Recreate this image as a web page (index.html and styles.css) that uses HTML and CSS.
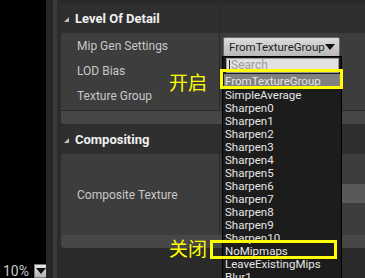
FILE: index.html
```html
<!DOCTYPE html>
<html lang="zh-CN">
  <head>
    <meta charset="UTF-8" />
    <meta name="viewport" content="width=device-width, initial-scale=1.0" />
    <title>Mip Gen Settings</title>
    <link rel="stylesheet" href="styles.css">
  </head>
  <body>
    <div class="app">
      <div class="viewport">
        <div class="zoom">
          <span>10%</span>
          <span class="zoom-btn"><span class="caret dark"></span></span>
        </div>
      </div>
      <div class="strip strip-a"></div>
      <div class="strip strip-b"></div>
      <div class="strip strip-c"></div>

      <div class="details">
        <section class="category">
          <div class="cat-head">
            <div class="name"><span class="arrow"></span>Level Of Detail</div>
            <div class="value"></div>
          </div>
          <div class="row">
            <div class="name">Mip Gen Settings</div>
            <div class="value">
              <div class="combo">FromTextureGroup<span class="caret dark"></span></div>
            </div>
          </div>
          <div class="row">
            <div class="name">LOD Bias</div>
            <div class="value"></div>
          </div>
          <div class="row">
            <div class="name">Texture Group</div>
            <div class="value"></div>
          </div>
          <div class="cat-end"></div>
        </section>
        <div class="cat-foot"></div>

        <section class="category">
          <div class="cat-head">
            <div class="name"><span class="arrow"></span>Compositing</div>
            <div class="value"></div>
          </div>
          <div class="row row-tall">
            <div class="name">Composite Texture</div>
            <div class="value"><div class="asset-box"></div></div>
          </div>
        </section>
        <div class="cat-foot"></div>
      </div>
    </div>

    <div class="menu">
      <div class="search"><span class="cursor"></span>Search</div>
      <div class="item selected">FromTextureGroup</div>
      <div class="item">SimpleAverage</div>
      <div class="item">Sharpen0</div>
      <div class="item">Sharpen1</div>
      <div class="item">Sharpen2</div>
      <div class="item">Sharpen3</div>
      <div class="item">Sharpen4</div>
      <div class="item">Sharpen5</div>
      <div class="item">Sharpen6</div>
      <div class="item">Sharpen7</div>
      <div class="item">Sharpen8</div>
      <div class="item">Sharpen9</div>
      <div class="item">Sharpen10</div>
      <div class="item">NoMipmaps</div>
      <div class="item">LeaveExistingMips</div>
      <div class="item">Blur1</div>
    </div>

    <div class="note note-on">开启</div>
    <div class="mark mark-on"></div>
    <div class="note note-off">关闭</div>
    <div class="mark mark-off"></div>
  </body>
</html>
```

FILE: styles.css
```css
* {
  margin: 0;
  padding: 0;
  box-sizing: border-box;
}

body {
  background-color: #000;
  width: 365px;
  height: 278px;
  overflow: hidden;
  position: relative;
  font-family: Roboto, "Noto Sans", sans-serif;
}

.app {
  display: flex;
  height: 278px;
}

.viewport {
  width: 46px;
  background-color: #000;
  display: flex;
  align-items: flex-end;
}

.zoom {
  display: flex;
  align-items: center;
  gap: 5px;
  padding-left: 3px;
  color: #c8c8c8;
  font-size: 14px;
  height: 15px;
}

.zoom-btn {
  width: 14px;
  height: 14px;
  background: linear-gradient(#e4e4e4, #b4b4b4);
  border: 1px solid #777;
  display: flex;
  align-items: center;
  justify-content: center;
}

.strip-a {
  width: 7px;
  background-color: #262626;
}

.strip-b {
  width: 4px;
  background-color: #3a3a3a;
}

.strip-c {
  width: 4px;
  background-color: #2c2c2c;
}

.details {
  flex: 1;
  background-color: #2a2a2a;
  padding-top: 4px;
  display: flex;
  flex-direction: column;
}

.category {
  background-color: #3d3d3d;
  border-radius: 3px 0 0 0;
  overflow: hidden;
}

.cat-head {
  display: flex;
  height: 29px;
  background-color: #2f2f2f;
}

.cat-head .name {
  color: #f0f0f0;
  font-weight: bold;
  font-size: 13px;
  padding-left: 3px;
  gap: 6px;
}

.arrow {
  width: 0;
  height: 0;
  border-left: 5px solid transparent;
  border-bottom: 5px solid #bdbdbd;
  margin-top: 2px;
}

.row {
  display: flex;
  height: 25px;
}

.row-tall {
  height: 81px;
}

.name {
  width: 159px;
  display: flex;
  align-items: center;
  padding-left: 16px;
  color: #c8c8c8;
  font-size: 12px;
  border-right: 1px solid #2b2b2b;
}

.value {
  flex: 1;
  display: flex;
  align-items: center;
  padding-left: 3px;
}

.cat-end {
  height: 3px;
  border-bottom: 1px solid #2b2b2b;
}

.cat-foot {
  height: 13px;
  background-color: #474747;
  border-radius: 0 0 0 3px;
  margin-bottom: 1px;
}

.combo {
  width: 117px;
  height: 20px;
  margin-top: 3px;
  background: linear-gradient(#dcdcdc, #b9b9b9);
  border: 1px solid #6a6a6a;
  border-radius: 2px;
  color: #1e1e1e;
  font-size: 11.5px;
  display: flex;
  align-items: center;
  justify-content: space-between;
  padding: 0 4px 0 5px;
}

.caret {
  width: 0;
  height: 0;
  border-left: 5px solid transparent;
  border-right: 5px solid transparent;
  border-top: 6px solid #eee;
}

.caret.dark {
  border-top-color: #111;
}

.asset-box {
  margin-left: auto;
  width: 70px;
  height: 19px;
  margin-top: -2px;
  background-color: #595959;
}

.menu {
  position: absolute;
  left: 222px;
  top: 56px;
  width: 120px;
  height: 230px;
  background-color: #1c1c1c;
  border: 1px solid #000;
  padding: 1px 1px;
}

.search {
  height: 15px;
  margin: 0 1px 1px 2px;
  background-color: #e2e2e2;
  border: 1px solid #9a9a9a;
  color: #9b9b9b;
  font-size: 12px;
  line-height: 13px;
  padding-left: 2px;
  display: flex;
  align-items: center;
}

.cursor {
  width: 1px;
  height: 11px;
  background-color: #222;
  margin-right: 1px;
}

.item {
  height: 13px;
  line-height: 13px;
  padding-left: 1px;
  color: #e6e6e6;
  font-size: 11.5px;
}

.item.selected {
  background-color: #808080;
  height: 14px;
  line-height: 14px;
  margin-bottom: 1px;
}

.note {
  position: absolute;
  color: #ffff00;
  font-family: "Noto Sans CJK SC", sans-serif;
  font-size: 19px;
  line-height: 22px;
}

.note-on {
  left: 169px;
  top: 71px;
}

.note-off {
  left: 169px;
  top: 237px;
}

.mark {
  position: absolute;
  border: 3px solid #ffff00;
}

.mark-on {
  left: 220px;
  top: 69px;
  width: 123px;
  height: 20px;
}

.mark-off {
  left: 210px;
  top: 240px;
  width: 127px;
  height: 19px;
}
```
